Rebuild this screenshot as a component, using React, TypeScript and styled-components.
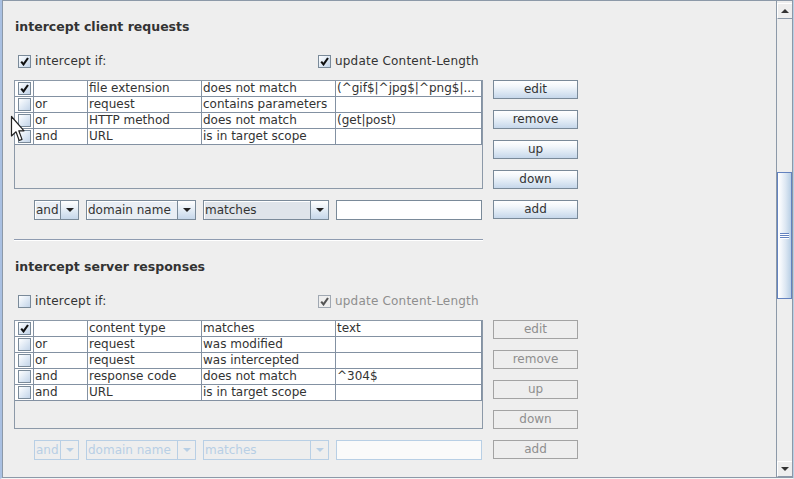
import React, { FC } from 'react';
import styled, { createGlobalStyle, css } from 'styled-components';

const GlobalStyle = createGlobalStyle`
  html, body {
    margin: 0;
    padding: 0;
    background: #eeeeee;
  }

  body {
    font-family: 'DejaVu Sans', 'Liberation Sans', sans-serif;
    font-size: 12px;
    color: #333333;
  }

  * {
    box-sizing: border-box;
  }
`;

interface Rule {
  on: boolean;
  op: string;
  what: string;
  how: string;
  value: string;
}

const clientRules: Rule[] = [
  { on: true, op: '', what: 'file extension', how: 'does not match', value: '(^gif$|^jpg$|^png$|...' },
  { on: false, op: 'or', what: 'request', how: 'contains parameters', value: '' },
  { on: false, op: 'or', what: 'HTTP method', how: 'does not match', value: '(get|post)' },
  { on: false, op: 'and', what: 'URL', how: 'is in target scope', value: '' },
];

const serverRules: Rule[] = [
  { on: true, op: '', what: 'content type', how: 'matches', value: 'text' },
  { on: false, op: 'or', what: 'request', how: 'was modified', value: '' },
  { on: false, op: 'or', what: 'request', how: 'was intercepted', value: '' },
  { on: false, op: 'and', what: 'response code', how: 'does not match', value: '^304$' },
  { on: false, op: 'and', what: 'URL', how: 'is in target scope', value: '' },
];

const Frame = styled.div`
  position: relative;
  width: 794px;
  height: 479px;
  display: flex;
  overflow: hidden;
  background: #eeeeee;
  border-left: 2px solid #a9c0e2;
  border-right: 1px solid #b8cfe5;
  border-bottom: 1px solid #f6f6f6;
`;

const ScrollPane = styled.div`
  flex: 1;
  min-width: 0;
  display: flex;
  border: 1px solid #8c99a8;
  border-right: none;
`;

const Viewport = styled.div`
  flex: 1;
  overflow: hidden;
  padding-left: 11px;
`;

const ScrollBar = styled.div`
  width: 17px;
  display: flex;
  flex-direction: column;
  padding-top: 2px;
  border-left: 1px solid #8c99a8;
  border-right: 1px solid #8c99a8;
`;

const ArrowButton = styled.div<{ $down?: boolean }>`
  height: 16px;
  display: flex;
  align-items: center;
  justify-content: center;
  background: #eeeeee;
  border-top: 1px solid #ffffff;
  border-left: 1px solid #ffffff;
  border-bottom: 1px solid #8c99a8;

  &::after {
    content: '';
    width: 0;
    height: 0;
    border-left: 4px solid transparent;
    border-right: 4px solid transparent;
    ${(p) =>
      p.$down
        ? css`
            border-top: 4px solid #333333;
          `
        : css`
            border-bottom: 4px solid #333333;
          `}
  }
`;

const Track = styled.div`
  flex: 1;
  background: #eeeeee;
`;

const Thumb = styled.div`
  margin-top: 153px;
  height: 127px;
  display: flex;
  flex-direction: column;
  align-items: center;
  justify-content: center;
  gap: 1px;
  border: 1px solid #6382bf;
  background: linear-gradient(to right, #ffffff 0%, #f2f6fb 25%, #dbe6f2 60%, #b8cfe5 100%);
`;

const Grip = styled.span`
  width: 9px;
  height: 1px;
  background: #6382bf;
  box-shadow: 0 1px 0 #ffffff;
`;

const Section = styled.section`
  display: flex;
  flex-direction: column;
  padding-top: 18px;
`;

const Heading = styled.h2`
  margin: 0;
  padding-left: 1px;
  font-size: 12.5px;
  font-weight: bold;
  line-height: 15px;
  color: #333333;
`;

const OptionsRow = styled.div`
  display: grid;
  grid-template-columns: 300px auto;
  height: 15px;
  margin-top: 20px;
  padding-left: 4px;
`;

const Option = styled.label<{ $disabled?: boolean }>`
  display: flex;
  align-items: center;
  gap: 4px;
  line-height: 15px;
  letter-spacing: 0.2px;
  color: ${(p) => (p.$disabled ? '#8e8e8e' : '#333333')};
`;

const Box = styled.span<{ $disabled?: boolean }>`
  width: 13px;
  height: 13px;
  flex: none;
  display: inline-flex;
  align-items: center;
  justify-content: center;
  border: 1px solid ${(p) => (p.$disabled ? '#a0a8b2' : '#7a8a99')};
  background: ${(p) =>
    p.$disabled
      ? '#eeeeee'
      : 'linear-gradient(to bottom right, #ffffff 0%, #e3ecf6 45%, #c3d4e8 100%)'};
`;

const Body = styled.div`
  display: flex;
  gap: 10px;
  margin-top: 11px;
`;

const Table = styled.div`
  width: 469px;
  height: 109px;
  border: 1px solid #8c99a8;
  background: #eeeeee;
  overflow: hidden;
`;

const Row = styled.div`
  display: grid;
  grid-template-columns: 19px 54px 114px 134px 146px;
  height: 16px;
  background: #ffffff;
  border-bottom: 1px solid #8391a2;
`;

const Cell = styled.div<{ $center?: boolean }>`
  display: flex;
  align-items: center;
  justify-content: ${(p) => (p.$center ? 'center' : 'flex-start')};
  padding-left: ${(p) => (p.$center ? '0' : '1px')};
  border-right: 1px solid #8391a2;
  line-height: 15px;
  white-space: nowrap;
  overflow: hidden;
  color: #333333;
`;

const Buttons = styled.div`
  display: flex;
  flex-direction: column;
  gap: 11px;
`;

const Button = styled.button<{ $disabled?: boolean }>`
  width: 85px;
  height: 19px;
  padding: 0;
  font-family: inherit;
  font-size: 12px;
  line-height: 17px;
  text-align: center;
  border: 1px solid ${(p) => (p.$disabled ? '#a3a3a3' : '#7a8a99')};
  color: ${(p) => (p.$disabled ? '#8e8e8e' : '#333333')};
  background: ${(p) =>
    p.$disabled
      ? '#eeeeee'
      : 'linear-gradient(to bottom, #ffffff 0%, #f3f7fb 30%, #dde8f3 65%, #c6d7ea 100%)'};
`;

const FilterRow = styled.div`
  display: flex;
  gap: 10px;
  margin-top: 11px;
`;

const Filters = styled.div`
  width: 469px;
  height: 20px;
  display: flex;
  gap: 7px;
  padding-left: 20px;
`;

const Combo = styled.div<{ $width: number; $disabled?: boolean }>`
  width: ${(p) => p.$width}px;
  height: 20px;
  display: flex;
  border: 1px solid ${(p) => (p.$disabled ? '#b8cfe5' : '#7a8a99')};
`;

const ComboField = styled.div<{ $disabled?: boolean; $shaded?: boolean }>`
  flex: 1;
  min-width: 0;
  padding-left: 1px;
  line-height: 18px;
  white-space: nowrap;
  overflow: hidden;
  color: ${(p) => (p.$disabled ? '#b8cfe5' : '#333333')};
  background: ${(p) => (p.$disabled ? '#eeeeee' : p.$shaded ? '#dfe4ea' : '#e9eef4')};
  box-shadow: ${(p) => (p.$disabled ? 'none' : 'inset 1px 1px 0 #ffffff')};
`;

const ComboArrow = styled.div<{ $disabled?: boolean }>`
  width: 18px;
  flex: none;
  display: flex;
  align-items: center;
  justify-content: center;
  border-left: 1px solid ${(p) => (p.$disabled ? '#b8cfe5' : '#7a8a99')};
  background: ${(p) =>
    p.$disabled ? '#eeeeee' : 'linear-gradient(to bottom, #ffffff 0%, #dde8f3 60%, #c6d7ea 100%)'};

  &::after {
    content: '';
    width: 0;
    height: 0;
    border-left: 4px solid transparent;
    border-right: 4px solid transparent;
    border-top: 4px solid ${(p) => (p.$disabled ? '#b8cfe5' : '#222222')};
  }
`;

const TextField = styled.div<{ $disabled?: boolean }>`
  width: 146px;
  height: 20px;
  border: 1px solid ${(p) => (p.$disabled ? '#b8cfe5' : '#7a8a99')};
  background: ${(p) => (p.$disabled ? '#fafafa' : '#ffffff')};
`;

const Separator = styled.hr`
  width: 469px;
  height: 2px;
  margin: 19px 0 0;
  border: none;
  border-top: 1px solid #8e9bb0;
  border-bottom: 1px solid #ffffff;
`;

const Cursor = styled.svg`
  position: absolute;
  left: 8px;
  top: 115px;
`;

const Check: FC<{ disabled?: boolean }> = ({ disabled }) => (
  <svg width="9" height="9" viewBox="0 0 9 9">
    <path
      d="M1.2 4.6 L3.5 7.4 L8 1"
      fill="none"
      stroke={disabled ? '#555555' : '#111111'}
      strokeWidth="2.1"
    />
  </svg>
);

const CheckBox: FC<{ checked: boolean; disabled?: boolean }> = ({ checked, disabled }) => (
  <Box $disabled={disabled}>{checked && <Check disabled={disabled} />}</Box>
);

interface SectionProps {
  title: string;
  intercept: boolean;
  locked?: boolean;
  rules: Rule[];
}

const RulesSection: FC<SectionProps> = ({ title, intercept, locked, rules }) => (
  <Section>
    <Heading>{title}</Heading>

    <OptionsRow>
      <Option>
        <CheckBox checked={intercept} />
        intercept if:
      </Option>
      <Option $disabled={locked}>
        <CheckBox checked disabled={locked} />
        update Content-Length
      </Option>
    </OptionsRow>

    <Body>
      <Table>
        {rules.map((rule, i) => (
          <Row key={i}>
            <Cell $center>
              <CheckBox checked={rule.on} />
            </Cell>
            <Cell>{rule.op}</Cell>
            <Cell>{rule.what}</Cell>
            <Cell>{rule.how}</Cell>
            <Cell>{rule.value}</Cell>
          </Row>
        ))}
      </Table>

      <Buttons>
        <Button $disabled={locked}>edit</Button>
        <Button $disabled={locked}>remove</Button>
        <Button $disabled={locked}>up</Button>
        <Button $disabled={locked}>down</Button>
      </Buttons>
    </Body>

    <FilterRow>
      <Filters>
        <Combo $width={45} $disabled={locked}>
          <ComboField $disabled={locked}>and</ComboField>
          <ComboArrow $disabled={locked} />
        </Combo>
        <Combo $width={110} $disabled={locked}>
          <ComboField $disabled={locked}>domain name</ComboField>
          <ComboArrow $disabled={locked} />
        </Combo>
        <Combo $width={126} $disabled={locked}>
          <ComboField $disabled={locked} $shaded>
            matches
          </ComboField>
          <ComboArrow $disabled={locked} />
        </Combo>
        <TextField $disabled={locked} />
      </Filters>
      <Button $disabled={locked}>add</Button>
    </FilterRow>
  </Section>
);

export default function App() {
  return (
    <>
      <GlobalStyle />
      <Frame>
        <ScrollPane>
          <Viewport>
            <RulesSection title="intercept client requests" intercept rules={clientRules} />
            <Separator />
            <RulesSection
              title="intercept server responses"
              intercept={false}
              locked
              rules={serverRules}
            />
          </Viewport>

          <ScrollBar>
            <ArrowButton />
            <Track>
              <Thumb>
                <Grip />
                <Grip />
                <Grip />
              </Thumb>
            </Track>
            <ArrowButton $down />
          </ScrollBar>
        </ScrollPane>

        <Cursor width="15" height="29" viewBox="0 0 15 29">
          <path
            d="M1.5 1.5 L1.5 21 L6 16.8 L9.2 25.5 L12 24.4 L8.8 15.8 L14 15.8 Z"
            fill="#ffffff"
            stroke="#222222"
            strokeWidth="1.2"
            strokeLinejoin="round"
          />
        </Cursor>
      </Frame>
    </>
  );
}
